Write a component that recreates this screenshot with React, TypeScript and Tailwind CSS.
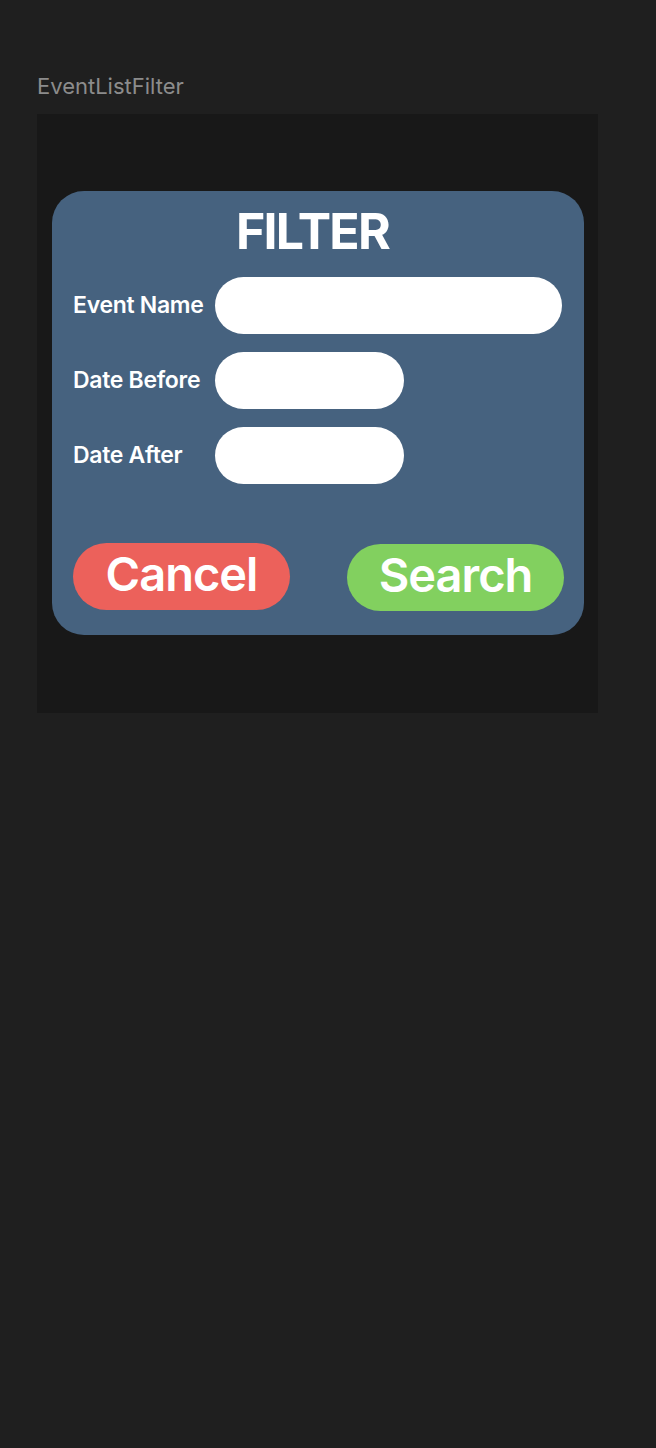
import React from "react";

// Figma-style preview: frame label above a dark frame holding the filter card.
function Field({ label, wide }: { label: string; wide?: boolean }) {
  return (
    <div className="flex items-center">
      <span className="w-[142px] shrink-0 text-[23px] font-semibold leading-none tracking-[-0.3px] text-white">
        {label}
      </span>
      <input
        type="text"
        className={`h-[57px] rounded-full bg-white outline-none ${wide ? "w-[347px]" : "w-[189px]"}`}
      />
    </div>
  );
}

export default function App() {
  return (
    <div
      className="min-h-[1448px] w-full bg-[#1f1f1f] pl-[37px] pt-[74px]"
      style={{ fontFamily: "Inter, 'Noto Sans', sans-serif" }}
    >
      <div className="text-[22px] leading-6 text-[#8c8c8c]">EventListFilter</div>

      <div className="mt-4 h-[599px] w-[561px] bg-[#181818] pl-[15px] pt-[77px]">
        <div className="flex h-[444px] w-[532px] flex-col rounded-[32px] bg-[#46627f] pl-[21px] pr-[20px] pt-[15px]">
          <h1 className="pr-[12px] text-center text-[50px] font-bold leading-none tracking-[-1.8px] text-white">
            FILTER
          </h1>

          <div className="mt-[21px] flex flex-col gap-[18px]">
            <Field label="Event Name" wide />
            <Field label="Date Before" />
            <Field label="Date After" />
          </div>

          <div className="mt-[59px] flex items-start justify-between">
            <button className="flex h-[67px] w-[217px] items-center justify-center rounded-full bg-[#ec615b] pb-[7px] text-[47px] font-semibold leading-none tracking-[-1px] text-white">
              Cancel
            </button>
            <button className="mt-px flex h-[67px] w-[217px] items-center justify-center rounded-full bg-[#82d05f] pb-[7px] text-[47px] font-semibold leading-none tracking-[-1px] text-white">
              Search
            </button>
          </div>
        </div>
      </div>
    </div>
  );
}
